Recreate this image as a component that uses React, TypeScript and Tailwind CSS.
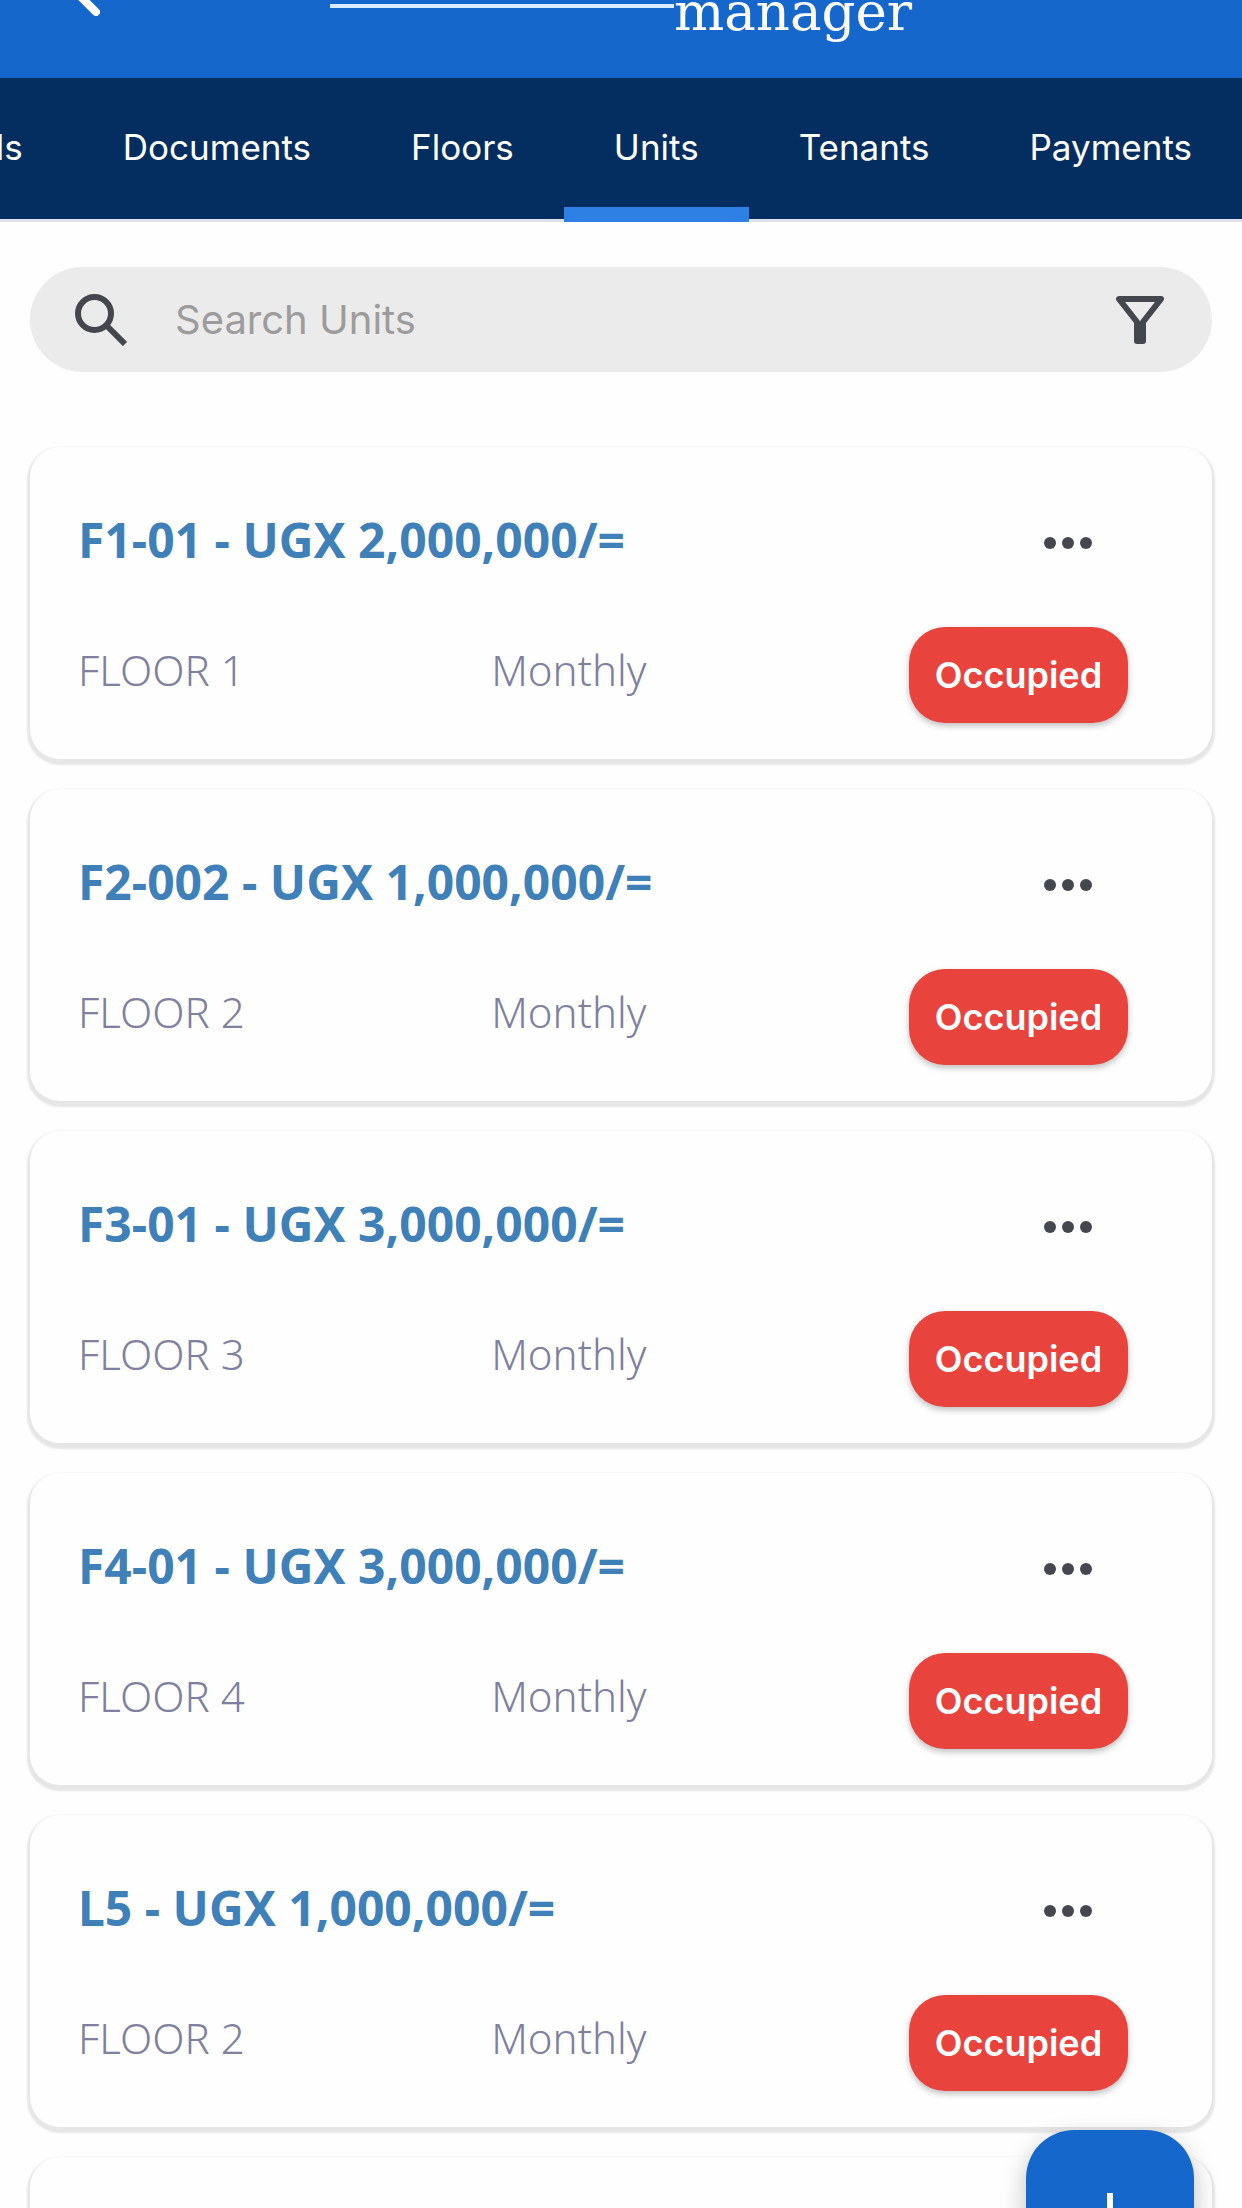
import { useState } from 'react'

const tabs = ['Details', 'Documents', 'Floors', 'Units', 'Tenants', 'Payments']

const units = [
  { name: 'F1-01', rent: '2,000,000', floor: 'FLOOR 1' },
  { name: 'F2-002', rent: '1,000,000', floor: 'FLOOR 2' },
  { name: 'F3-01', rent: '3,000,000', floor: 'FLOOR 3' },
  { name: 'F4-01', rent: '3,000,000', floor: 'FLOOR 4' },
  { name: 'L5', rent: '1,000,000', floor: 'FLOOR 2' },
]

const cardClass = 'bg-[#fefefe] rounded-[30px] shadow-[0_3px_2px_3px_#e6e6e6] h-[312px] shrink-0'

function Header() {
  return (
    <header className="h-[78px] bg-[#1567cc] grid grid-cols-[1fr_auto_1fr] items-start overflow-hidden shrink-0">
      <button aria-label="Back" className="justify-self-start ml-[68px] -mt-10">
        <svg width="32" height="56" viewBox="0 0 32 56" fill="none" stroke="#fff" strokeWidth="8" strokeLinecap="round" strokeLinejoin="round">
          <path d="M28 4L4 28l24 24" />
        </svg>
      </button>
      <div className="flex items-start text-white">
        <div className="w-[344px] h-1 mt-1 bg-[#d9ecff]" />
        <span className="font-['DejaVu_Serif',serif] font-light text-[53px] leading-[56px] -mt-4">manager</span>
      </div>
    </header>
  )
}

function UnitCard({ name, rent, floor }: { name: string; rent: string; floor: string }) {
  return (
    <li className={`${cardClass} pl-12 pr-[84px] pt-[60px]`}>
      <div className="flex justify-between items-center h-16">
        <h2 className="pt-0.5 text-[48px] leading-[64px] font-bold text-[#3f80b8]">{name} - UGX {rent}/=</h2>
        <button aria-label={`Options for ${name}`} className="mr-9 mt-2">
          <svg width="48" height="12" viewBox="0 0 48 12" fill="#44474e">
            <circle cx="6" cy="6" r="6" />
            <circle cx="24" cy="6" r="6" />
            <circle cx="42" cy="6" r="6" />
          </svg>
        </button>
      </div>
      <div className="flex justify-between items-center mt-14 text-[42px] leading-[56px] font-light text-[#7f7f9f]">
        <span className="-mt-2.5">{floor}</span>
        <span className="-mt-2.5 pr-4">Monthly</span>
        <button className="w-[219px] h-24 rounded-[36px] bg-[#e8433d] text-white font-['Inter',sans-serif] text-[36px] font-semibold shadow-[0_3px_6px_rgba(0,0,0,0.25)]">
          Occupied
        </button>
      </div>
    </li>
  )
}

export default function App() {
  const [active, setActive] = useState('Units')
  const [query, setQuery] = useState('')

  const visible = units.filter(u => u.name.toLowerCase().includes(query.toLowerCase()))

  return (
    <div className="h-screen overflow-hidden flex flex-col bg-[#fefefe] font-['Noto_Sans',sans-serif]">
      <Header />

      <nav className="h-36 bg-[#042e60] shadow-[inset_0_-3px_0_#dfe1ea] flex justify-end overflow-hidden shrink-0 font-['Inter',sans-serif]">
        {tabs.map(tab => (
          <button
            key={tab}
            onClick={() => setActive(tab)}
            className="relative h-36 px-[50px] pb-1.5 shrink-0 text-[35px] text-white"
          >
            {tab}
            {tab === active && <span className="absolute inset-x-0 bottom-0 h-[15px] bg-[#2f80e4]" />}
          </button>
        ))}
      </nav>

      <main className="px-[30px] pt-[45px] flex flex-col">
        <div className="h-[105px] rounded-full bg-[#ebebeb] flex items-center pl-[45px] pr-12 shrink-0">
          <svg width="52" height="52" viewBox="0 0 52 52" fill="none" stroke="#44474e" strokeWidth="6" className="shrink-0">
            <circle cx="19.500" cy="19.500" r="16.500" />
            <path d="M31 31l19 19" strokeWidth="6" />
          </svg>
          <input
            aria-label="Search Units"
            placeholder="Search Units"
            value={query}
            onChange={e => setQuery(e.target.value)}
            className="ml-12 flex-1 min-w-0 outline-none font-['Inter',sans-serif] text-[40px] text-[#44474e] placeholder:text-[#9c9c9c]"
          />
          <button aria-label="Filter">
            <svg width="48" height="50" viewBox="0 0 48 50" fill="none" stroke="#44474e" strokeWidth="6" strokeLinejoin="round">
              <path d="M3 4h42L27 27v19h-6V27z" />
              <path d="M24 28v18" />
            </svg>
          </button>
        </div>

        <ul className="mt-[75px] flex flex-col gap-[30px]">
          {visible.map((u, i) => (
            <UnitCard key={i} {...u} />
          ))}
          <li className={cardClass} />
        </ul>
      </main>

      <button
        aria-label="Add unit"
        className="fixed right-12 -bottom-[90px] w-[168px] h-[168px] rounded-[48px] bg-[#1567cc] flex items-center justify-center shadow-[0_9px_24px_rgba(0,0,0,0.25)]"
      >
        <svg width="42" height="42" viewBox="0 0 42 42" stroke="#fff" strokeWidth="6">
          <path d="M21 0v42M0 21h42" />
        </svg>
      </button>
    </div>
  )
}
